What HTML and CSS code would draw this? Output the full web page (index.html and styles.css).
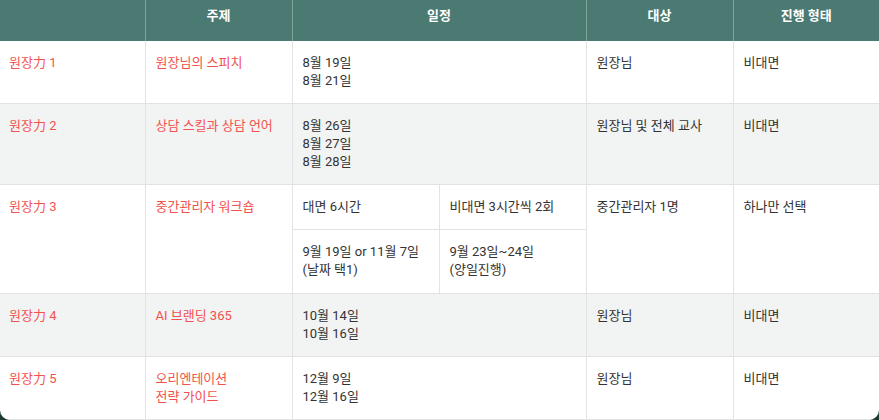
FILE: index.html
```html
<!DOCTYPE html>
<html>
<head>
  <title>원장力 일정</title>
  <link rel="stylesheet" href="styles.css">
</head>
<body>

  <div class="wrap">
    <table class="schedule">
      <colgroup>
        <col class="c1"><col class="c2"><col class="c3"><col class="c3"><col class="c4"><col class="c5">
      </colgroup>
      <thead>
        <tr>
          <th></th>
          <th>주제</th>
          <th colspan="2">일정</th>
          <th>대상</th>
          <th>진행 형태</th>
        </tr>
      </thead>
      <tbody>
        <tr>
          <td class="hl">원장力 1</td>
          <td class="hl">원장님의 스피치</td>
          <td colspan="2">8월 19일<br>8월 21일</td>
          <td>원장님</td>
          <td>비대면</td>
        </tr>
        <tr class="alt">
          <td class="hl">원장力 2</td>
          <td class="hl">상담 스킬과 상담 언어</td>
          <td colspan="2">8월 26일<br>8월 27일<br>8월 28일</td>
          <td>원장님 및 전체 교사</td>
          <td>비대면</td>
        </tr>
        <tr>
          <td class="hl" rowspan="2">원장力 3</td>
          <td class="hl" rowspan="2">중간관리자 워크숍</td>
          <td>대면 6시간</td>
          <td>비대면 3시간씩 2회</td>
          <td rowspan="2">중간관리자 1명</td>
          <td rowspan="2">하나만 선택</td>
        </tr>
        <tr class="sub">
          <td>9월 19일 or 11월 7일<br>(날짜 택1)</td>
          <td>9월 23일~24일<br>(양일진행)</td>
        </tr>
        <tr class="alt">
          <td class="hl">원장力 4</td>
          <td class="hl">AI 브랜딩 365</td>
          <td colspan="2">10월 14일<br>10월 16일</td>
          <td>원장님</td>
          <td>비대면</td>
        </tr>
        <tr>
          <td class="hl">원장力 5</td>
          <td class="hl">오리엔테이션<br>전략 가이드</td>
          <td colspan="2">12월 9일<br>12월 16일</td>
          <td>원장님</td>
          <td>비대면</td>
        </tr>
      </tbody>
    </table>
  </div>

</body>
</html>
```

FILE: styles.css
```css
body {
  margin: 0;
  background: #1d3a33;
  font-family: Roboto, "Noto Sans CJK KR", sans-serif;
}

.wrap {
  background: #fff;
  border-radius: 0 0 10px 10px;
  overflow: hidden;
}

.schedule {
  width: 100%;
  border-collapse: collapse;
  table-layout: fixed;
  font-size: 13px;
  line-height: 18px;
  color: #333;
}

.c1 { width: 145px; }
.c2 { width: 147px; }
.c3 { width: 147px; }
.c4 { width: 147px; }

th {
  background: #4a7a72;
  color: #fff;
  font-weight: bold;
  text-align: center;
  padding: 7px 9px 16px;
  border-left: 1px solid #7fa39c;
}

th:first-child {
  border-left: none;
}

td {
  text-align: left;
  vertical-align: top;
  padding: 13px 9px 13px 10px;
  border: 1px solid #e3e3e3;
  border-top: none;
}

tr > td:first-child.hl {
  padding-left: 9px;
}

td:first-child {
  border-left: none;
}

tr td:last-child {
  border-right: none;
}

.sub td {
  padding-bottom: 14px;
}

.alt td {
  background: #f2f3f3;
}

.hl {
  color: #f2524e;
}
```
